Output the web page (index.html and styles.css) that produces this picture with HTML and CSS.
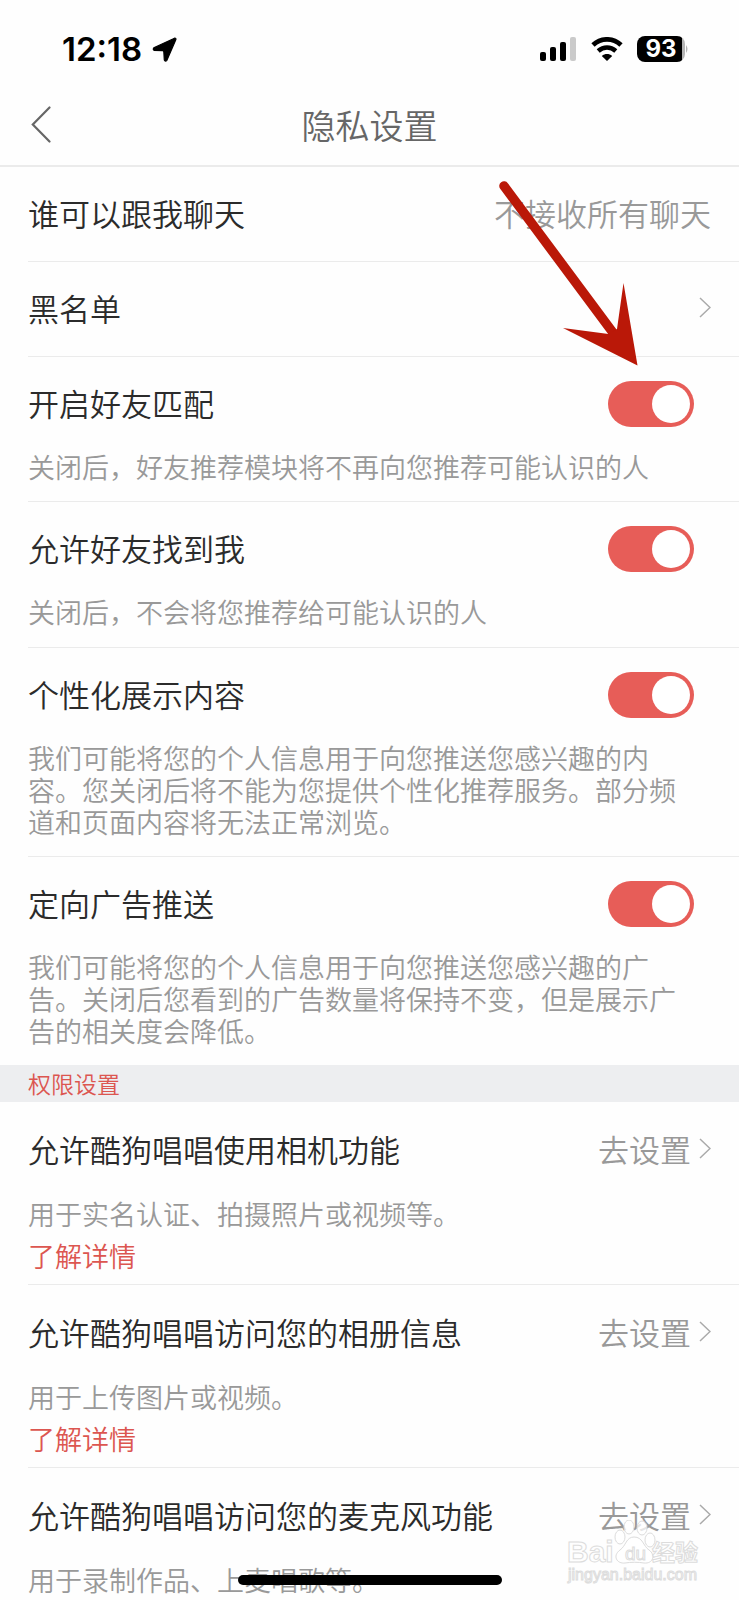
FILE: index.html
```html
<!DOCTYPE html>
<html lang="zh-CN">
<head>
<meta charset="utf-8">
<meta name="viewport" content="width=device-width, initial-scale=1">
<title>隐私设置</title>
<link rel="stylesheet" href="styles.css">
</head>
<body>
<div class="screen">
  <div class="status">
    <div class="status-left">
      <span class="time">12:18</span>
      <svg class="location" width="25" height="25" viewBox="0 0 25 25" aria-hidden="true"><path d="M22.500 1.200 L1.800 10.800 Q.6 12.300 2 13.300 L10.800 13.700 Q11.700 13.800 11.800 14.600 L12.300 23 Q13.300 25 14.900 23.300 L23.900 2.600 Q24.200 .9 22.500 1.200Z" stroke="#000" stroke-width="1.200" stroke-linejoin="round"/></svg>
    </div>
    <div class="status-right">
      <svg width="37" height="25" viewBox="0 0 37 25" aria-hidden="true"><rect x="0" y="15" width="6" height="9" rx="2"/><rect x="10" y="10" width="6" height="14" rx="2"/><rect x="20" y="5" width="6" height="19" rx="2"/><rect x="30" y="0" width="6" height="24" rx="2" fill="#cacaca"/></svg>
      <svg width="32" height="25" viewBox="0 0 32 25" aria-hidden="true"><path d="M2 8 C10 .5 22 .5 30 8" fill="none" stroke="#000" stroke-width="4.800"/><path d="M7.200 14 C12.500 9.400 19.500 9.400 24.800 14" fill="none" stroke="#000" stroke-width="4.600"/><path d="M16 24 L10.800 18.900 C14 16.300 18 16.300 21.200 18.900Z"/></svg>
      <div class="battery"><span class="battery-level">93</span><svg width="4" height="8" viewBox="0 0 4 8" aria-hidden="true"><path d="M1 0 Q4 4 1 8Z" fill="#b5b5b5"/></svg></div>
    </div>
  </div>
  <header class="nav">
    <button class="back" type="button" aria-label="返回"><svg width="20" height="37" viewBox="0 0 20 37"><path d="M18.500 1.500 L1.800 18.500 L18.500 35.500" fill="none" stroke="#666" stroke-width="2.200" stroke-linecap="round"/></svg></button>
    <h1 class="title">隐私设置</h1>
  </header>
  <main>
    <section class="group">
      <div class="row"><div class="line"><span class="label">谁可以跟我聊天</span><button class="go" type="button">不接收所有聊天</button></div></div>
      <div class="row"><div class="line"><span class="label">黑名单</span><button class="go" type="button" aria-label="黑名单"><svg class="chevron" viewBox="0 0 12 21"><path d="M1 1 L11 10.500 L1 20"/></svg></button></div></div>
      <div class="row"><div class="line"><label class="label" for="match">开启好友匹配</label><input class="switch" id="match" type="checkbox" role="switch" checked></div><p class="desc">关闭后，好友推荐模块将不再向您推荐可能认识的人</p></div>
      <div class="row"><div class="line"><label class="label" for="find">允许好友找到我</label><input class="switch" id="find" type="checkbox" role="switch" checked></div><p class="desc">关闭后，不会将您推荐给可能认识的人</p></div>
      <div class="row"><div class="line"><label class="label" for="personal">个性化展示内容</label><input class="switch" id="personal" type="checkbox" role="switch" checked></div><p class="desc">我们可能将您的个人信息用于向您推送您感兴趣的内容。您关闭后将不能为您提供个性化推荐服务。部分频道和页面内容将无法正常浏览。</p></div>
      <div class="row"><div class="line"><label class="label" for="ads">定向广告推送</label><input class="switch" id="ads" type="checkbox" role="switch" checked></div><p class="desc">我们可能将您的个人信息用于向您推送您感兴趣的广告。关闭后您看到的广告数量将保持不变，但是展示广告的相关度会降低。</p></div>
    </section>
    <h2 class="section-title">权限设置</h2>
    <section class="group permissions">
      <div class="row"><div class="line"><span class="label">允许酷狗唱唱使用相机功能</span><button class="go" type="button">去设置<svg class="chevron" viewBox="0 0 12 21"><path d="M1 1 L11 10.500 L1 20"/></svg></button></div><p class="desc">用于实名认证、拍摄照片或视频等。</p><a class="more" href="#camera">了解详情</a></div>
      <div class="row"><div class="line"><span class="label">允许酷狗唱唱访问您的相册信息</span><button class="go" type="button">去设置<svg class="chevron" viewBox="0 0 12 21"><path d="M1 1 L11 10.500 L1 20"/></svg></button></div><p class="desc">用于上传图片或视频。</p><a class="more" href="#photos">了解详情</a></div>
      <div class="row"><div class="line"><span class="label">允许酷狗唱唱访问您的麦克风功能</span><button class="go" type="button">去设置<svg class="chevron" viewBox="0 0 12 21"><path d="M1 1 L11 10.500 L1 20"/></svg></button></div><p class="desc">用于录制作品、上麦唱歌等。</p></div>
    </section>
  </main>
  <svg class="pointer" width="150" height="190" viewBox="0 0 150 190" aria-hidden="true"><path d="M14 8 L122.500 154" stroke="#ba1808" stroke-width="9.500" stroke-linecap="round"/><path d="M147.500 187.500 L73 150 L118.500 156 L127 151 L133.500 105Z" fill="#ba1808"/></svg>
  <div class="home-bar"></div>
  <svg class="watermark" width="140" height="66" viewBox="0 0 140 66" aria-hidden="true">
    <g fill="#fff" fill-opacity=".75" stroke="#dcdcdc" stroke-width="1">
      <text x="1" y="42" font-size="30" font-weight="700">Bai</text>
      <ellipse cx="54" cy="17" rx="5" ry="7"/><ellipse cx="63" cy="7" rx="5" ry="7"/><ellipse cx="76" cy="8" rx="5" ry="7"/><ellipse cx="84" cy="20" rx="5" ry="7"/>
      <path d="M68 17 C60 17 60 26 54 30 C46 36 51 44 59 43 C65 42 72 42 78 43 C87 44 90 35 83 30 C77 26 77 17 68 17Z"/>
      <text x="59" y="40" font-size="19">du</text>
      <text x="86" y="41" font-size="23" font-weight="700">经验</text>
      <text x="2" y="60" font-size="16">jingyan.baidu.com</text>
    </g>
  </svg>
</div>
</body>
</html>
```
FILE: styles.css
```css
* { box-sizing: border-box; }

body {
  margin: 0;
  background: #fefefe;
  color: #2b2b2b;
  font-family: "Noto Sans CJK SC", sans-serif;
  font-weight: 350;
}

button {
  padding: 0;
  border: 0;
  background: none;
  font: inherit;
  color: inherit;
  cursor: pointer;
}

svg { display: block; }

.screen {
  position: relative;
  height: 100vh;
  overflow: hidden;
}

.status {
  display: flex;
  justify-content: space-between;
  align-items: center;
  height: 84px;
  padding: 14px 50px 0 62px;
}

.status-left,
.status-right {
  display: flex;
  align-items: center;
}

.status-left { gap: 10px; }
.status-right { gap: 14px; }

.time {
  color: #000;
  font: 600 33px/40px Inter, sans-serif;
}

.battery {
  display: flex;
  align-items: center;
}

.battery-level {
  width: 48px;
  border-radius: 8px;
  background: linear-gradient(90deg, #000 45px, #b5b5b5 45px);
  color: #fff;
  font: 700 24px/26px Inter, sans-serif;
  text-align: center;
}

.nav {
  display: grid;
  grid-template-columns: 1fr auto 1fr;
  align-items: center;
  height: 83px;
  padding: 0 31px;
  border-bottom: 2px solid #ebebeb;
}

.back { justify-self: start; }

.title {
  margin: 0;
  color: #666;
  font-size: 34px;
  font-weight: 350;
  line-height: 40px;
}

.row {
  margin-left: 28px;
  border-bottom: 1px solid #ebebeb;
}

.row:last-child { border-bottom: 0; }

.line {
  display: flex;
  justify-content: space-between;
  align-items: center;
  height: 94px;
  padding-right: 28px;
  font-size: 31px;
}

.permissions .line { height: 96px; }

.label,
.go { padding-bottom: 4px; }

.go {
  display: flex;
  align-items: center;
  gap: 8px;
  color: #999;
}

.chevron {
  width: 12px;
  height: 21px;
  fill: none;
  stroke: #aaa;
  stroke-width: 1.5;
}

.switch {
  display: flex;
  align-items: center;
  justify-content: flex-end;
  appearance: none;
  width: 86px;
  height: 46px;
  margin: 0 17px 0 0;
  padding: 4px;
  border-radius: 23px;
  background: #ccc;
}

.switch::before {
  content: "";
  width: 38px;
  height: 38px;
  border-radius: 50%;
  background: #fff;
}

.switch:checked { background: #e75d58; }
.switch:not(:checked) { justify-content: flex-start; }

.desc {
  margin: 0;
  padding: 0 54px 18px 0;
  color: #999;
  font-size: 27px;
  line-height: 32px;
}

.group > .row:nth-child(4) { padding-bottom: 1px; }

.desc:has(+ .more) { padding-bottom: 10px; }

.more {
  display: block;
  width: max-content;
  margin-bottom: 12px;
  color: #dc5650;
  font-size: 27px;
  line-height: 32px;
  text-decoration: none;
}

.section-title {
  margin: 0;
  padding-left: 28px;
  background: #edeef0;
  color: #dc5650;
  font-size: 23px;
  font-weight: 350;
  line-height: 37px;
}

.pointer {
  position: absolute;
  top: 178px;
  left: 490px;
}

.home-bar {
  position: absolute;
  bottom: 15px;
  left: 50%;
  width: 264px;
  height: 10px;
  margin-left: -132px;
  border-radius: 5px;
  background: #000;
}

.watermark {
  position: absolute;
  right: 33px;
  bottom: 14px;
  font-family: "Liberation Sans", "Noto Sans CJK SC", sans-serif;
}
```
